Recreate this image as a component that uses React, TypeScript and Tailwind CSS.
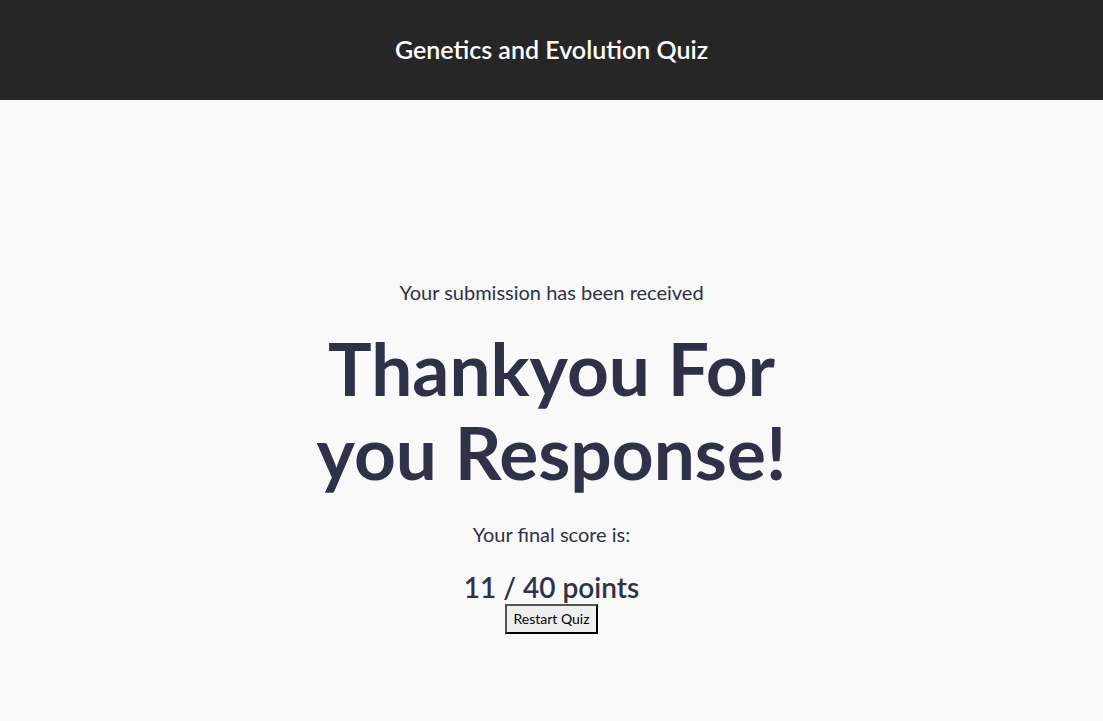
import React from 'react';

const font = { fontFamily: 'Lato, "Noto Sans", sans-serif' };

export default function App() {
  return (
    <div className="min-h-screen bg-[#f9f9f9] text-[#2e3148]" style={font}>
      <header className="h-[100px] bg-[#262626] flex items-center justify-center">
        <h1 className="text-[25px] font-semibold text-white">Genetics and Evolution Quiz</h1>
      </header>
      <main className="flex flex-col items-center pt-[178px] text-center">
        <p className="text-[20px] font-normal leading-[28px]">Your submission has been received</p>
        <h2 className="mt-[20px] text-[73px] font-bold leading-[84px]">
          Thankyou For
          <br />
          you Response!
        </h2>
        <p className="mt-[26px] text-[20px] font-normal leading-[28px]">Your final score is:</p>
        <p className="mt-[22px] text-[28px] font-semibold leading-[34px]">11 / 40 points</p>
        <button
          className="bg-[#efefef] border-2 border-black px-[6px] py-[3px] text-[14px] text-black leading-[20px]"
          style={{ borderStyle: 'outset' }}
        >
          Restart Quiz
        </button>
      </main>
    </div>
  );
}
